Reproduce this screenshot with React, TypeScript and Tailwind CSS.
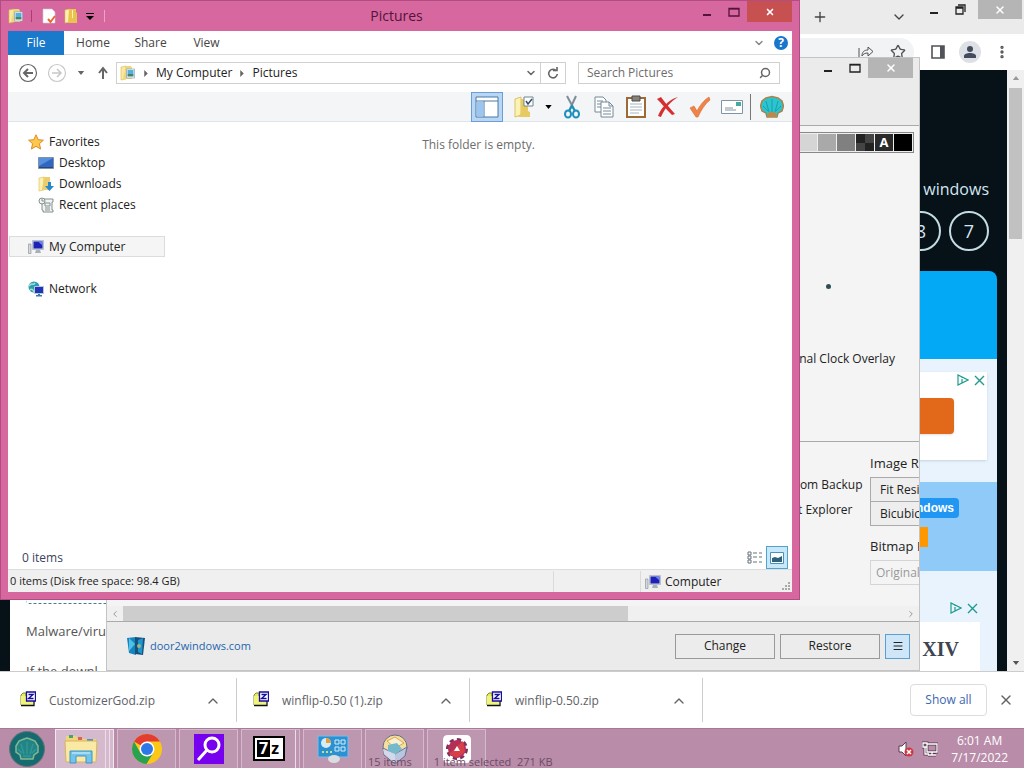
import type { ReactNode } from "react";
import { ChevronDown, ChevronLeft, ChevronRight, ChevronUp, Menu, MoreVertical, Plus, Search, Star, X } from "lucide-react";

interface IconProps {
  className?: string;
}

const PicturesIcon = ({ className }: IconProps) => (
  <svg viewBox="0 0 16 16" className={className} aria-hidden="true">
    <path d="M1 2l5-1v13l-5 1z" fill="#f8e9a0" stroke="#d6b84f" strokeWidth=".6" />
    <path d="M6 1h5l1 2v11H3z" fill="#eed57a" />
    <path d="M6.5 4h8v9h-8z" fill="#f7fbff" stroke="#8aa3b5" strokeWidth=".7" />
    <path d="M7.5 5h6v4h-6z" fill="#55afe0" />
    <path d="M7.5 9h6v2.500h-6z" fill="#4b8264" />
  </svg>
);

const FolderIcon = ({ className }: IconProps) => (
  <svg viewBox="0 0 16 16" className={className} aria-hidden="true">
    <path d="M2 2l5-1v13l-5 1z" fill="#fbf0b0" stroke="#dcbc55" strokeWidth=".6" />
    <path d="M6 1h7v3l1 1v10H5z" fill="#e8c34e" />
    <path d="M9 2h1v8H9z" fill="#fff3b5" />
  </svg>
);

const DocumentIcon = ({ className }: IconProps) => (
  <svg viewBox="0 0 16 16" className={className} aria-hidden="true">
    <path d="M2 1h9l3 3v11H2z" fill="#fff" stroke="#cfc7d4" strokeWidth=".6" />
    <path d="M7 11l2.500 3L14 8" fill="none" stroke="#e56a35" strokeWidth="2" />
  </svg>
);

const ComputerIcon = ({ className }: IconProps) => (
  <svg viewBox="0 0 16 16" className={className} aria-hidden="true">
    <path d="M.5 5h2.500v9.500H.5z" fill="#d4d8dc" stroke="#858c94" strokeWidth=".6" />
    <path d="M4.500 1.500h11v9h-11z" fill="#ccd5e3" stroke="#9aa7b9" strokeWidth=".6" />
    <path d="M5.500 2.500h9v7h-9z" fill="#1d22b4" />
    <path d="M10 2.500h4.500v4z" fill="#7182ef" />
    <path d="M8 11h4l1 3H7z" fill="#a8b0ba" />
  </svg>
);

const ShellIcon = ({ className }: IconProps) => (
  <svg viewBox="0 0 24 24" className={className} aria-hidden="true">
    <path d="M7 22l-1-4-4-2-1.500-5L2 6l4-3 6-1.500L18 3l4 3 1.500 5L22 16l-4 2-1 4z" fill="#2cc4cf" stroke="#a6854e" strokeWidth="1.500" />
    <path d="M12 17V4M9 17L6 6m9 11l3-11M8 16l-5-5m13 5l5-5" stroke="#1397a6" strokeWidth=".8" />
    <path d="M7 22l2-5h6l2 5z" fill="#b98a4d" />
  </svg>
);

const CaretDown = ({ className }: IconProps) => (
  <svg viewBox="0 0 8 5" className={className} aria-hidden="true">
    <path d="M0 0h8L4 5z" fill="currentColor" />
  </svg>
);

const CaretRight = ({ className }: IconProps) => (
  <svg viewBox="0 0 4 8" className={className} aria-hidden="true">
    <path d="M0 0l4 4-4 4z" fill="currentColor" />
  </svg>
);

const ArchiveIcon = () => (
  <svg viewBox="0 0 16 16" className="mb-1 h-4 w-4" aria-hidden="true">
    <path d="M1 14V4l2-2h3v12z" fill="#e6ee5a" stroke="#7d8a2e" />
    <path d="M1 5h12v9H1z" fill="#f1f47c" />
    <path d="M1 14.500h13V9" fill="none" stroke="#111" strokeWidth="1.300" />
    <path d="M6.500 1h9v9h-9z" fill="#fff" stroke="#160d9c" strokeWidth="1.300" />
    <path d="M8.500 3.500h4.500l-4.500 4h5" fill="none" stroke="#160d9c" strokeWidth="1.400" />
  </svg>
);

const MinimizeGlyph = () => (
  <svg viewBox="0 0 10 10" className="h-[10px] w-[10px]" aria-hidden="true">
    <path d="M1 7h8v2H1z" fill="currentColor" />
  </svg>
);

const MaximizeGlyph = () => (
  <svg viewBox="0 0 12 10" className="h-[10px] w-3" aria-hidden="true">
    <path d="M1 1.500h10v7.500H1z" fill="none" stroke="currentColor" strokeWidth="1.300" />
    <path d="M1 1h10v1.500H1z" fill="currentColor" />
  </svg>
);

const AdChoices = ({ className }: IconProps) => (
  <div className={className}>
    <svg viewBox="0 0 12 12" className="h-3 w-3" fill="none" stroke="#1b9c8c" strokeWidth="1.200" aria-hidden="true">
      <path d="M1 1v10l10-5zM5 5v4M5 3v1" />
    </svg>
    <svg viewBox="0 0 12 12" className="h-3 w-3" fill="none" stroke="#1b9c8c" strokeWidth="1.400" aria-hidden="true">
      <path d="M2 2l9 9M11 2l-9 9" />
    </svg>
  </div>
);

const BrowserHeader = () => (
  <header>
    <div className="flex h-[34px] justify-end bg-[#ebebeb] text-[#222]">
      <button aria-label="New tab" className="mr-[61px] flex w-5 items-center justify-center text-[#444]">
        <Plus className="h-4 w-4" />
      </button>
      <button aria-label="Search tabs" className="mr-[22px] flex w-4 items-center text-[#444]">
        <ChevronDown className="h-4 w-4" />
      </button>
      <div className="flex h-[19px] items-center">
        <button aria-label="Minimize" className="mr-4">
          <MinimizeGlyph />
        </button>
        <button aria-label="Restore down" className="mr-3">
          <svg viewBox="0 0 11 11" className="h-[11px] w-[11px]" fill="none" stroke="currentColor" strokeWidth="1.300" aria-hidden="true">
            <path d="M1 3h7v7H1zM3 1h7v7M1 4h7" />
          </svg>
        </button>
        <button aria-label="Close" className="mr-[2px] flex h-[19px] w-[44px] items-center justify-center bg-[#b5b5b5] text-white">
          <X className="h-3 w-3" strokeWidth={3} />
        </button>
      </div>
    </div>
    <div className="flex h-9 items-center justify-end bg-white pr-[14px] text-[#505357]">
      <div className="flex h-7 flex-1 items-center justify-end gap-4 rounded-full bg-[#f1f3f4] pr-2">
        <button aria-label="Share">
          <svg viewBox="0 0 16 14" className="h-[14px] w-4" fill="none" stroke="currentColor" aria-hidden="true">
            <path d="M1 3v10M4 11c0-4 2-6 6-6V2l5 4.500L10 11V8c-3 0-5 1-6 3z" />
          </svg>
        </button>
        <button aria-label="Bookmark">
          <Star className="h-4 w-4" />
        </button>
      </div>
      <button aria-label="Side panel" className="mr-[14px] ml-[17px]">
        <svg viewBox="0 0 14 14" className="h-[14px] w-[14px]" aria-hidden="true">
          <path d="M1 1h12v12H1z" fill="none" stroke="currentColor" strokeWidth="1.600" />
          <path d="M9 1h4v12H9z" fill="currentColor" />
        </svg>
      </button>
      <button aria-label="Profile" className="mr-[13px] flex h-[22px] w-[22px] items-center justify-center rounded-full bg-[#dde1e6]">
        <svg viewBox="0 0 14 14" className="h-[14px] w-[14px]" fill="#434b5c" aria-hidden="true">
          <circle cx="7" cy="4" r="3" />
          <path d="M1 13v-2c0-4 12-4 12 0v2z" />
        </svg>
      </button>
      <button aria-label="More">
        <MoreVertical className="h-4 w-4" strokeWidth={3} />
      </button>
    </div>
  </header>
);

const WebPage = () => (
  <div className="flex min-h-0 flex-1">
    <div className="flex min-w-0 flex-1 flex-col bg-[#061118] px-[10px]">
      <div className="h-[201px] shrink-0 pr-2 pt-[107px] text-right text-[#d3e6f1]">
        <p className="text-base leading-6 font-medium">windows</p>
        <div className="mt-[10px] flex justify-end gap-2 text-lg font-medium">
          <a href="#eight" className="flex h-10 w-10 items-center justify-center rounded-full border-2 border-[#c5dbe4]">8</a>
          <a href="#seven" className="flex h-10 w-10 items-center justify-center rounded-full border-2 border-[#c5dbe4]">7</a>
        </div>
      </div>
      <div className="h-[88px] shrink-0 rounded-t-lg bg-[#03a9f4]" />
      <div className="flex min-h-0 flex-1 overflow-hidden bg-[#e9f3fd]">
        <div className="flex-1 bg-white px-4 text-[#555]">
          <div className="h-[245px] rounded border-b border-dashed border-[#3f8293]" />
          <p className="mt-[7px] text-[13px] leading-10">Malware/viru</p>
          <p className="text-[13px] leading-10">If the downl</p>
        </div>
        <div className="w-[130px]">
          <div className="mr-[10px] mt-[13px] h-[88px] bg-white shadow-sm">
            <AdChoices className="flex justify-end gap-1 pr-[2px] pt-[2px]" />
            <div className="mr-[33px] mt-3 h-9 rounded bg-[#e16919] shadow" />
          </div>
          <div className="mt-[22px] h-[89px] bg-[#90caf9] pt-4">
            <p className="mr-[38px] h-5 rounded-sm bg-[#2196f3] pr-[5px] text-right font-['Liberation_Sans'] text-xs leading-5 font-bold text-white">ndows</p>
            <div className="mr-[69px] mt-[9px] h-5 bg-[#ff9800]" />
          </div>
          <div className="mr-[17px] pt-[31px]">
            <AdChoices className="flex justify-end gap-1 pr-[2px]" />
            <div className="mt-2 flex h-20 justify-end bg-white pr-[21px] font-['Liberation_Serif',serif] text-xl leading-[54px] font-bold text-[#3d4452]">XIV</div>
          </div>
        </div>
      </div>
    </div>
    <div className="flex w-[17px] flex-col items-center bg-[#f0f0f0] pt-[6px] pb-[6px] text-[#555]">
      <CaretDown className="h-1 w-2 rotate-180 text-[#999]" />
      <div className="mt-2 h-[151px] w-[13px] bg-[#c1c1c1]" />
      <CaretDown className="mt-auto h-1 w-2" />
    </div>
  </div>
);

const CustomizerWindow = () => (
  <section className="absolute left-[106px] top-[57px] flex h-[614px] w-[814px] flex-col overflow-hidden border border-[#c4c4c4] bg-[#f4f4f4] text-xs text-[#222]">
    <div className="flex h-[68px] shrink-0 items-start justify-end border-b border-[#aaa] bg-[#ebebeb] pr-[6px]">
      <div className="flex h-5 items-center">
        <button aria-label="Minimize" className="mr-4">
          <MinimizeGlyph />
        </button>
        <button aria-label="Maximize" className="mr-[7px]">
          <MaximizeGlyph />
        </button>
        <button aria-label="Close" className="flex h-5 w-[45px] items-center justify-center bg-[#b5b5b5] text-white">
          <X className="h-3 w-3" strokeWidth={3} />
        </button>
      </div>
    </div>
    <div className="flex shrink-0 justify-end pr-[5px] pt-[6px]">
      <div className="flex gap-px border border-[#888] bg-[#eee] p-px">
        <div className="h-[17px] w-[18px] bg-[#d5d5d5]" />
        <div className="h-[17px] w-[18px] bg-[#a9a9a9]" />
        <div className="h-[17px] w-[18px] bg-[#808080]" />
        <div className="grid h-[17px] w-[18px] grid-cols-2 bg-[#222]">
          <span />
          <span className="bg-[#444]" />
          <span className="bg-[#444]" />
        </div>
        <div className="h-[17px] w-[18px] bg-[#2a2a2a] text-center text-[13px] leading-[17px] font-bold text-white">A</div>
        <div className="h-[17px] w-[18px] bg-black" />
      </div>
    </div>
    <div className="flex h-[289px] shrink-0 flex-col items-end border-b border-[#aaa]">
      <div className="mr-[88px] mt-[131px] h-[5px] w-[5px] rounded-full bg-[#2f4f55]" />
      <p className="mr-6 mt-[60px] leading-5">onal Clock Overlay</p>
    </div>
    <div className="flex flex-1 pl-[688px]">
      <div className="w-[75px] shrink-0 pt-[33px]">
        <p className="mb-[5px] leading-5">rom Backup</p>
        <p className="pl-[3px] leading-5">t Explorer</p>
      </div>
      <div className="w-40 shrink-0 pt-[11px]">
        <label htmlFor="resize" className="block text-[13px] leading-5">Image Resize</label>
        <select id="resize" className="mt-1 block h-[25px] w-full appearance-none border border-[#aaa] bg-[#eeeeee] px-[9px]">
          <option>Fit Resize</option>
        </select>
        <select aria-label="Resize filter" className="-mt-px block h-[25px] w-full appearance-none border border-[#aaa] bg-[#eeeeee] px-[9px]">
          <option>Bicubic</option>
        </select>
        <label htmlFor="bitmap" className="mt-[10px] block text-[13px] leading-5">Bitmap Format</label>
        <select id="bitmap" disabled className="mt-1 block h-[25px] w-full appearance-none border border-[#d5d5d5] px-[5px] text-[#999]">
          <option>Original</option>
        </select>
      </div>
    </div>
    <div className="flex h-4 shrink-0 items-center border-b border-[#aaa] bg-[#f0f0f0] text-[#888]">
      <ChevronLeft className="mx-[3px] h-[10px] w-[10px]" />
      <div className="h-[15px] w-[505px] bg-[#cdcdcd]" />
      <ChevronRight className="mr-[3px] ml-auto h-[10px] w-[10px]" />
    </div>
    <div className="flex h-12 shrink-0 items-center bg-[#ebebeb] pr-[9px] pl-5">
      <svg viewBox="0 0 18 20" className="mr-[5px] h-5 w-[18px]" aria-hidden="true">
        <path d="M0 2l9-1v18l-7-2z" fill="#1685be" />
        <path d="M8 1l10 1-2 17-8-1z" fill="#17507b" />
        <path d="M2 2l6 6-6 7z" fill="#4fc1e9" />
        <path d="M11 4l5-2-1 16-4-2z" fill="#1d96cf" />
        <circle cx="12" cy="10" r="2" fill="#9bb681" />
      </svg>
      <a href="#door2windows" className="mr-auto text-[11px] text-[#1d66ae]">door2windows.com</a>
      <div className="flex gap-[5px]">
        <button className="h-[25px] w-[100px] border border-[#999] bg-[#ececec]">Change</button>
        <button className="h-[25px] w-[100px] border border-[#999] bg-[#ececec]">Restore</button>
        <button aria-label="Menu" className="flex h-[25px] w-[25px] items-center justify-center border border-[#5a9fd4] bg-[#cfe6f8]">
          <Menu className="h-3 w-3" />
        </button>
      </div>
    </div>
  </section>
);

const ExplorerTitle = () => (
  <div className="flex h-[31px] shrink-0 items-start text-[#54133a]">
    <div className="flex h-[30px] w-[110px] items-center text-black">
      <PicturesIcon className="h-4 w-4" />
      <span className="mx-[7px] h-3 w-px bg-[#a83e78]" />
      <DocumentIcon className="ml-[2px] h-4 w-4" />
      <FolderIcon className="ml-[6px] h-4 w-4" />
      <svg viewBox="0 0 8 7" className="ml-[7px] h-[7px] w-2" aria-hidden="true">
        <path d="M0 0h8v1H0zM0 3h8L4 7z" />
      </svg>
      <span className="ml-[10px] h-3 w-px bg-[#e9a5c6]" />
    </div>
    <h1 className="flex-1 pr-[27px] text-center text-sm leading-[30px]">Pictures</h1>
    <div className="flex h-[21px] items-center">
      <button aria-label="Minimize" className="mr-4">
        <MinimizeGlyph />
      </button>
      <button aria-label="Maximize" className="mr-[7px]">
        <MaximizeGlyph />
      </button>
      <button aria-label="Close" className="flex h-[21px] w-[45px] items-center justify-center bg-[#c75050] text-white">
        <X className="h-[10px] w-[10px]" strokeWidth={4} />
      </button>
    </div>
  </div>
);

const AddressRow = () => (
  <div className="flex h-[37px] shrink-0 items-center pr-3 pb-px pl-[10px] text-[#666]">
    <button aria-label="Back">
      <svg viewBox="0 0 20 20" className="h-5 w-5" fill="none" stroke="#666" aria-hidden="true">
        <circle cx="10" cy="10" r="8.500" strokeWidth="1.200" />
        <path d="M15 10H6m4-4l-4 4 4 4" strokeWidth="2" />
      </svg>
    </button>
    <button aria-label="Forward" className="ml-[9px]">
      <svg viewBox="0 0 20 20" className="h-5 w-5" fill="none" stroke="#c8c8c8" aria-hidden="true">
        <circle cx="10" cy="10" r="8.500" strokeWidth="1.200" />
        <path d="M5 10h9m-4-4l4 4-4 4" strokeWidth="1.600" />
      </svg>
    </button>
    <button aria-label="Recent locations" className="ml-[10px]">
      <CaretDown className="h-1 w-2" />
    </button>
    <button aria-label="Up" className="ml-3">
      <svg viewBox="0 0 12 14" className="h-[14px] w-3" fill="none" stroke="currentColor" strokeWidth="2" aria-hidden="true">
        <path d="M6 13V3M2 7l4-5 4 5" />
      </svg>
    </button>
    <div className="ml-[7px] flex h-[22px] flex-1 items-center border border-[#d0d0d0] pl-[3px] text-[#222]">
      <PicturesIcon className="h-4 w-4" />
      <CaretRight className="mx-2 h-[7px] w-1 text-[#666]" />
      <span>My Computer</span>
      <CaretRight className="mx-2 h-[7px] w-1 text-[#666]" />
      <span>Pictures</span>
      <button aria-label="Previous locations" className="mr-[3px] ml-auto text-[#666]">
        <ChevronDown className="h-3 w-3" strokeWidth={3} />
      </button>
      <button aria-label="Refresh" className="flex h-5 w-[25px] items-center justify-center border-l border-[#d0d0d0] text-[#666]">
        <svg viewBox="0 0 12 12" className="h-3 w-3" fill="none" stroke="currentColor" strokeWidth="1.600" aria-hidden="true">
          <path d="M9.500 4A4.300 4.300 0 1 0 10.300 7M6 3.500h4V0" />
        </svg>
      </button>
    </div>
    <div className="ml-3 flex h-[22px] w-[202px] items-center border border-[#d0d0d0] pr-2 pl-2">
      <input type="search" aria-label="Search Pictures" placeholder="Search Pictures" className="min-w-0 flex-1 outline-none placeholder:text-[#6d6d6d]" />
      <Search className="h-3 w-3 -scale-x-100" strokeWidth={3} />
    </div>
  </div>
);

interface ToolProps {
  label: string;
  children: ReactNode;
}

const Tool = ({ label, children }: ToolProps) => (
  <button aria-label={label} className="flex h-full w-8 items-center justify-center">
    {children}
  </button>
);

const Toolbar = () => (
  <div className="flex h-[30px] shrink-0 items-center justify-end border-b border-[#dfe5ea] bg-[#f3f5f7] pr-1">
    <button aria-label="Navigation pane" className="mr-[5px] flex h-[30px] w-8 items-center justify-center border border-[#699fd6] bg-[#b9d6f3]">
      <svg viewBox="0 0 24 22" className="h-[22px] w-6" aria-hidden="true">
        <path d="M1 1h22v20H1z" fill="#fff" stroke="#4779a8" />
        <path d="M1 5h22M9 5v16" stroke="#4779a8" />
        <path d="M2 6h6v14H2z" fill="#9ac7f2" />
      </svg>
    </button>
    <Tool label="Select">
      <svg viewBox="0 0 22 24" className="h-6 w-[22px]" aria-hidden="true">
        <path d="M2 4l6-2v18l-6 2z" fill="#fbf2b4" stroke="#dcc365" />
        <path d="M8 4h7v12l2 1v5H5l3-4z" fill="#e7ca60" />
        <path d="M11 2h9v9h-9z" fill="#fff" stroke="#708596" />
        <path d="M13 6l2 3 4-5" fill="none" stroke="#344c65" strokeWidth="1.500" />
      </svg>
    </Tool>
    <button aria-label="More options" className="flex w-4 justify-center text-black">
      <CaretDown className="h-1 w-[7px]" />
    </button>
    <Tool label="Cut">
      <svg viewBox="0 0 18 24" className="h-6 w-[18px]" fill="none" aria-hidden="true">
        <path d="M4 1l8 15M13 1L6 16" stroke="#7f8d9a" strokeWidth="2" />
        <ellipse cx="5" cy="19" rx="3" ry="3.500" stroke="#1d91bd" strokeWidth="2" />
        <ellipse cx="13" cy="19" rx="3" ry="3.500" stroke="#1d91bd" strokeWidth="2" />
        <path d="M6 16l3-5 3 5" stroke="#1d91bd" strokeWidth="2" />
      </svg>
    </Tool>
    <Tool label="Copy">
      <svg viewBox="0 0 20 24" className="h-6 w-5" fill="#fff" stroke="#758997" aria-hidden="true">
        <path d="M1 2h8l3 3v12H1zM3 6h6M3 9h6M3 12h6" />
        <path d="M7 7h8l4 4v11H7zM15 7v4h4M9 13h8M9 16h8M9 19h8" />
      </svg>
    </Tool>
    <Tool label="Paste">
      <svg viewBox="0 0 22 24" className="h-6 w-[22px]" aria-hidden="true">
        <path d="M2 3h18v19H2z" fill="#fff" stroke="#9b6a35" strokeWidth="2" />
        <path d="M7 1h8v5H7z" fill="#87827a" stroke="#4d4b48" />
        <path d="M5 9h12M5 12h12M5 15h12M5 18h9" stroke="#a8b6c0" />
      </svg>
    </Tool>
    <Tool label="Delete">
      <svg viewBox="0 0 24 22" className="h-[22px] w-6" aria-hidden="true">
        <path d="M1 3l4-2c4 6 9 11 14 17l-3 1C10 13 6 8 1 3z" fill="#d52f2f" />
        <path d="M22 1C14 6 9 12 5 21l-3-1C5 12 12 4 22 1z" fill="#d52f2f" />
      </svg>
    </Tool>
    <Tool label="Rename">
      <svg viewBox="0 0 22 22" className="h-[22px] w-[22px]" aria-hidden="true">
        <path d="M1 12l4-2 3 5C11 9 15 4 20 1l1 3C16 8 12 14 9 21H7z" fill="#ee8448" stroke="#d96b30" strokeWidth=".6" />
      </svg>
    </Tool>
    <Tool label="Mail">
      <svg viewBox="0 0 22 14" className="h-[14px] w-[22px]" aria-hidden="true">
        <path d="M.5.5h21v13H.5z" fill="#fff" stroke="#8094a3" />
        <path d="M15 2h5v4h-5z" fill="#46a9a7" />
        <path d="M4 8h8M4 10h11" stroke="#8094a3" />
      </svg>
    </Tool>
    <span className="mr-[5px] ml-[2px] h-[26px] w-px bg-[#777]" />
    <Tool label="Classic Shell">
      <ShellIcon className="h-6 w-6" />
    </Tool>
  </div>
);

interface NavItemProps {
  label: string;
  icon: ReactNode;
  nested?: boolean;
  selected?: boolean;
}

const NavItem = ({ label, icon, nested, selected }: NavItemProps) => (
  <li>
    <a
      href="#folder"
      className={`flex h-[21px] items-center gap-[5px] border ${nested ? "pl-7" : "pl-[18px]"} ${
        selected ? "border-[#dcdcdc] bg-[#f5f5f5]" : "border-transparent"
      }`}
    >
      {icon}
      {label}
    </a>
  </li>
);

const NavPane = () => (
  <nav className="flex w-[157px] shrink-0 flex-col gap-[21px] pt-[9px] pl-px text-[#222]">
    <ul>
      <NavItem
        label="Favorites"
        icon={
          <svg viewBox="0 0 16 16" className="h-4 w-4" aria-hidden="true">
            <path d="M8 .800l2.200 4.900 5.200.500-4 3.500 1.200 5.300L8 12.300 3.400 15l1.200-5.300-4-3.500 5.200-.500z" fill="#fdc94c" stroke="#df8b25" />
          </svg>
        }
      />
      <NavItem
        nested
        label="Desktop"
        icon={
          <svg viewBox="0 0 16 16" className="h-4 w-4" aria-hidden="true">
            <path d="M.5 2.500h15v11H.5z" fill="#2f67c1" stroke="#8292a6" />
            <path d="M1 3h14L1 11z" fill="#5990dd" />
            <path d="M1 12h14v1H1z" fill="#284777" />
          </svg>
        }
      />
      <NavItem
        nested
        label="Downloads"
        icon={
          <svg viewBox="0 0 16 16" className="h-4 w-4" aria-hidden="true">
            <path d="M1 2l5-1v13l-5 1z" fill="#fbf0b0" stroke="#dcbc55" strokeWidth=".6" />
            <path d="M6 1h6v13H4z" fill="#e9cd70" />
            <path d="M10 6h3v4h3l-4.500 5L7 10h3z" fill="#2787cc" />
          </svg>
        }
      />
      <NavItem
        nested
        label="Recent places"
        icon={
          <svg viewBox="0 0 16 16" className="h-4 w-4" fill="#f2f4f4" stroke="#84908f" aria-hidden="true">
            <path d="M4 2h11v3h-1v8h1v2H5v-2H4z" />
            <path d="M7 6h5v3H7zM7 11h5M7 13h5" />
            <circle cx="4" cy="4" r="3" />
            <path d="M4 2v2h2" />
          </svg>
        }
      />
    </ul>
    <ul>
      <NavItem selected label="My Computer" icon={<ComputerIcon className="h-4 w-4" />} />
    </ul>
    <ul>
      <NavItem
        label="Network"
        icon={
          <svg viewBox="0 0 16 16" className="h-4 w-4" aria-hidden="true">
            <circle cx="6" cy="6" r="5.500" fill="#2c9bb8" />
            <path d="M1 5c3-4 4 0 6-3M2 9c2-2 3 0 4 2" fill="none" stroke="#a7e3c0" strokeWidth="1.500" />
            <path d="M6.500 5.500h9v7h-9z" fill="#2034b7" stroke="#b7c6d8" />
            <path d="M10 13h2v2h-2zM8 14h6v1.500H8z" fill="#3a78b0" />
          </svg>
        }
      />
    </ul>
  </nav>
);

const ExplorerWindow = () => (
  <section className="absolute top-0 left-0 flex h-[600px] w-[800px] flex-col border border-[#b34c82] bg-[#d6679f] px-[7px] pb-[7px] text-xs text-[#444]">
    <ExplorerTitle />
    <div className="-mt-px flex min-h-0 flex-1 flex-col bg-white">
      <div className="flex h-6 shrink-0 items-center border-b border-[#dadbdc] pt-px pr-1">
        <button className="h-6 w-14 bg-[#1979ca] text-white">File</button>
        <button className="w-[58px]">Home</button>
        <button className="w-[57px]">Share</button>
        <button className="w-[55px]">View</button>
        <button aria-label="Expand ribbon" className="ml-auto">
          <ChevronDown className="mr-[9px] h-3 w-3 text-[#888]" strokeWidth={3} />
        </button>
        <button aria-label="Help" className="h-[14px] w-[14px] rounded-full bg-[#1976cb] text-center leading-[14px] font-bold text-white">?</button>
      </div>
      <AddressRow />
      <Toolbar />
      <div className="flex min-h-0 flex-1">
        <NavPane />
        <p className="flex-1 pt-[13px] text-center leading-5 text-[#6d6d6d]">This folder is empty.</p>
      </div>
      <div className="flex h-6 shrink-0 items-center pt-px pr-1 pl-[14px] text-[#3b4260]">
        <span className="mr-auto">0 items</span>
        <button aria-label="Details view" className="mr-[3px]">
          <svg viewBox="0 0 16 14" className="h-[14px] w-4" fill="none" stroke="#68727c" aria-hidden="true">
            <path d="M1 1h3v3H1zM1 5h3v3H1zM1 9h3v3H1zM6 2h4M12 2h3M6 6h4M12 6h3M6 11h4M12 11h3" />
          </svg>
        </button>
        <button aria-label="Large icons view" className="flex h-[23px] w-[22px] items-center justify-center border border-[#4fa4cf] bg-[#c6e8f8]">
          <svg viewBox="0 0 14 12" className="h-3 w-[14px]" aria-hidden="true">
            <path d="M.5.5h13v11H.5z" fill="#fff" stroke="#4a91bc" />
            <path d="M2 6l3-1 3 1 4-2v6H2z" fill="#31627c" />
          </svg>
        </button>
      </div>
      <div className="flex h-[23px] shrink-0 items-center border-t border-[#ddd] bg-[#f0f0f0] pt-px pl-[2px] text-[#222]">
        <span className="flex-1 text-[11px]">0 items (Disk free space: 98.4 GB)</span>
        <span className="h-full w-[88px] border-x border-[#dadada]" />
        <span className="flex w-[151px] items-center gap-1 pl-1">
          <ComputerIcon className="h-4 w-4" />
          <span className="mr-auto">Computer</span>
          <svg viewBox="0 0 10 10" className="mt-2 mr-px h-[10px] w-[10px]" fill="#aaa" aria-hidden="true">
            <path d="M7 1h2v2H7zM7 4h2v2H7zM7 7h2v2H7zM4 4h2v2H4zM4 7h2v2H4zM1 7h2v2H1z" />
          </svg>
        </span>
      </div>
    </div>
  </section>
);

const downloads = ["CustomizerGod.zip", "winflip-0.50 (1).zip", "winflip-0.50.zip"];

const DownloadsBar = () => (
  <div className="flex h-[57px] shrink-0 items-center border-t border-[#ccc] bg-white pr-[10px] text-xs text-[#606267]">
    {downloads.map((name) => (
      <div key={name} className="flex h-11 w-[233px] items-center border-r border-[#ccc] pt-px pr-[15px] first:w-[237px] first:pl-5 not-first:pl-4">
        <ArchiveIcon />
        <span className="mr-auto ml-[13px]">{name}</span>
        <button aria-label={`${name} options`}>
          <ChevronUp className="h-4 w-4" />
        </button>
      </div>
    ))}
    <button className="ml-auto h-8 w-[77px] rounded border border-[#dadce0] text-xs font-medium text-[#3c67b1]">Show all</button>
    <button aria-label="Close downloads" className="ml-[11px]">
      <X className="h-4 w-4" />
    </button>
  </div>
);

interface TaskButtonProps {
  label: string;
  active?: boolean;
  stacked?: boolean;
  children: ReactNode;
}

const TaskButton = ({ label, active, stacked, children }: TaskButtonProps) => (
  <button
    aria-label={label}
    className={`flex h-10 w-[59px] border ${active ? "border-[#f4e6ef] bg-[#d5b9cc]" : "border-[#d5b9cc] bg-[#bd96af]"}`}
  >
    <span className="flex h-full flex-1 items-center justify-center">{children}</span>
    {stacked && <span className="h-full w-1 border-l border-[#efdce8]" />}
    {active && <span className="h-full w-1 border-l border-[#efdce8]" />}
  </button>
);

const Taskbar = () => (
  <footer className="relative flex h-10 shrink-0 items-center border-t border-[#a77b98] bg-[#b98ca9]">
    <button aria-label="Start" className="mr-[10px] ml-[9px] flex h-9 w-9 items-center justify-center rounded-full border border-[#5f7774] bg-[#176b70]">
      <svg viewBox="0 0 28 28" className="h-7 w-7" fill="none" stroke="#82b891" strokeWidth="1.500" aria-hidden="true">
        <path d="M8 24l-1-4-4-3v-6l3-5 5-2 3-1 3 1 5 2 3 5v6l-4 3-1 4z" fill="#238486" />
        <path d="M14 19V7M11 19L8 9m9 10l3-10M9 18l-4-4m14 4l4-4M10 21h8" stroke="#2f9795" />
      </svg>
    </button>
    <div className="flex gap-[3px]">
      <TaskButton label="File Explorer" active stacked>
        <svg viewBox="0 0 34 30" className="h-[30px] w-[34px]" aria-hidden="true">
          <path d="M2 2h10l2 3h18v23H2z" fill="#f0d57c" />
          <path d="M5 1h4v3H5z" fill="#49a26b" />
          <path d="M14 3h4v3h-4z" fill="#d8654c" />
          <path d="M23 5h6v2h-6z" fill="#4c8fd0" />
          <path d="M1 7h32l-1 21H2z" fill="#fae9a4" stroke="#d7b65b" />
          <path d="M6 29V17h22v12h-6v-7H12v7z" fill="#74c4e9" stroke="#3d95c4" />
          <path d="M8 19h18" stroke="#d9f4ff" />
        </svg>
      </TaskButton>
      <TaskButton label="Google Chrome">
        <svg viewBox="0 0 32 32" className="h-8 w-8" aria-hidden="true">
          <circle cx="16" cy="16" r="15" fill="#fbc817" />
          <path d="M16 16L3 8.500A15 15 0 0 1 29 8.500H16z" fill="#e33d32" />
          <path d="M3 8.500A15 15 0 0 0 15.500 31L22.500 19.500 9.500 20z" fill="#28a152" />
          <circle cx="16" cy="16" r="7.500" fill="#fff" />
          <circle cx="16" cy="16" r="6" fill="#2d78e6" />
        </svg>
      </TaskButton>
      <TaskButton label="Search">
        <svg viewBox="0 0 30 30" className="h-[30px] w-[30px]" aria-hidden="true">
          <path d="M0 0h30v30H0z" fill="#7700ef" />
          <circle cx="18" cy="11" r="7" fill="none" stroke="#fff" strokeWidth="3" />
          <path d="M13 16L4 26" stroke="#fff" strokeWidth="3" />
        </svg>
      </TaskButton>
      <TaskButton label="7-Zip" stacked>
        <span className="flex h-[25px] w-8 items-center justify-center border-2 border-black bg-white text-base leading-[17px] font-bold">
          <span className="bg-black px-[2px] text-white">7</span>
          <span className="px-px text-black">z</span>
        </span>
      </TaskButton>
      <TaskButton label="Control Panel">
        <svg viewBox="0 0 32 30" className="h-[30px] w-8" aria-hidden="true">
          <path d="M1 2h30v21H1z" fill="#2c91d2" stroke="#78bee9" />
          <circle cx="9" cy="9" r="5" fill="#d5edf7" />
          <path d="M9 9V4a5 5 0 0 1 5 5z" fill="#ef9b38" />
          <path d="M18 6h4v4h-4zM24 6h4v4h-4zM18 13h4v4h-4zM24 13h4v4h-4z" fill="#2c91d2" stroke="#d5edf7" />
          <path d="M5 18h10" stroke="#c3e375" strokeWidth="2" strokeDasharray="2 2" />
          <ellipse cx="17" cy="25" rx="6" ry="4" fill="#d9dde0" />
        </svg>
      </TaskButton>
      <TaskButton label="CustomizerGod">
        <svg viewBox="0 0 30 32" className="h-8 w-[30px]" aria-hidden="true">
          <circle cx="15" cy="14" r="12" fill="#f5dfa0" stroke="#65727a" />
          <path d="M7 8l8-4 9 6-9 5z" fill="#f8f0d5" stroke="#dda647" />
          <path d="M3 15l12 6 12-7-2 9-10 8-11-9z" fill="#bac6dc" stroke="#67719a" />
          <path d="M8 12l9-2 5 6-7 6-7-4z" fill="#75b9cb" />
          <path d="M15 21v9l-11-9-1-5z" fill="#d5d8e8" />
        </svg>
      </TaskButton>
      <TaskButton label="Settings tool">
        <svg viewBox="0 0 28 28" className="h-7 w-7" aria-hidden="true">
          <path d="M5 0h18q5 0 5 5v18q0 5-5 5H5q-5 0-5-5V5q0-5 5-5z" fill="#fff" />
          <circle cx="14" cy="14" r="9" fill="none" stroke="#812f61" strokeWidth="4" strokeDasharray="4 3" />
          <circle cx="14" cy="14" r="9" fill="#b23058" />
          <path d="M6 19L20 6l2 11-8 6z" fill="#d74049" />
          <path d="M11 16l3-5 3 5z" fill="#fff" />
        </svg>
      </TaskButton>
    </div>
    <p className="absolute bottom-[-3px] left-[368px] flex gap-[22px] text-[11px] leading-[18px] text-[#6d4b65]">
      <span>15 items</span>
      <span>1 item selected&nbsp; 271 KB</span>
    </p>
    <div className="ml-auto flex items-center pr-4 text-white">
      <svg viewBox="0 0 16 16" className="h-4 w-4" aria-hidden="true">
        <path d="M1 5h3l4-4v14l-4-4H1z" fill="#fff" stroke="#593b51" />
        <circle cx="11" cy="11" r="4.500" fill="#cd3943" />
        <path d="M9 9l4 4m0-4l-4 4" stroke="#fff" strokeWidth="1.500" />
      </svg>
      <svg viewBox="0 0 16 16" className="mr-[13px] ml-2 h-4 w-4" fill="none" aria-hidden="true">
        <path d="M5 3h10v8H5zM10 11v3M6 14h8M1 2h4v4H1zM3 6v7h4" stroke="#593b51" strokeWidth="3" />
        <path d="M5 3h10v8H5zM10 11v3M6 14h8M1 2h4v4H1zM3 6v7h4" stroke="#fff" strokeWidth="1.300" />
      </svg>
      <time className="text-center text-xs leading-[17px]">
        6:01 AM
        <br />
        7/17/2022
      </time>
    </div>
  </footer>
);

const App = () => (
  <main className="relative flex h-screen flex-col overflow-hidden bg-white font-['Open_Sans','Noto_Sans',sans-serif]">
    <BrowserHeader />
    <WebPage />
    <CustomizerWindow />
    <ExplorerWindow />
    <DownloadsBar />
    <Taskbar />
  </main>
);

export default App;
